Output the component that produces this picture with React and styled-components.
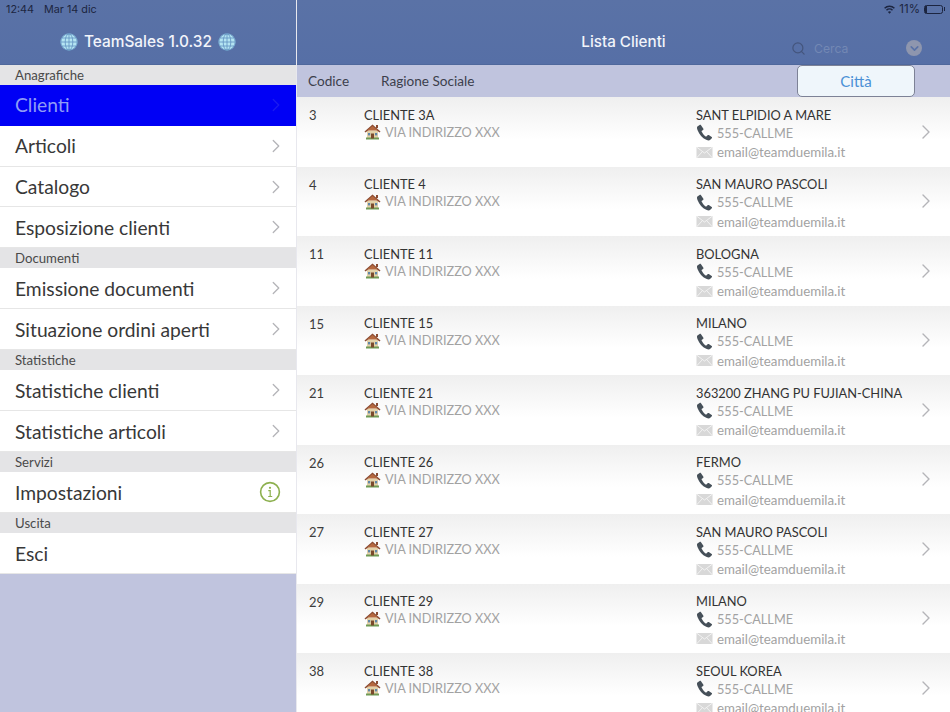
import React from "react";
import styled, { createGlobalStyle } from "styled-components";
import { ChevronRight, ChevronDown, Search } from "lucide-react";

const GlobalStyle = createGlobalStyle`
  html, body {
    margin: 0;
    height: 712px;
    overflow: hidden;
    background: #c0c4de;
  }
  * {
    box-sizing: border-box;
  }
`;

const Page = styled.div`
  display: grid;
  grid-template-columns: 297px 653px;
  width: 950px;
  height: 712px;
  overflow: hidden;
  font-family: Lato, "Open Sans", sans-serif;
`;

const Sidebar = styled.aside`
  background: #c0c4de;
  border-right: 1px solid #e8e8ee;
`;

const Header = styled.header`
  height: 65px;
  background: linear-gradient(#5a72a6, #566fa6);
  font-family: Inter, "Liberation Sans", sans-serif;
  color: #f2f4fa;
  border-bottom: 1px solid #4f689c;
`;

const StatusBar = styled.div`
  display: flex;
  align-items: center;
  justify-content: ${(p) => (p.$right ? "flex-end" : "flex-start")};
  height: 18px;
  padding: 0 ${(p) => (p.$right ? "6px" : "6px")};
  gap: ${(p) => (p.$right ? "4px" : "10px")};
  font-size: ${(p) => (p.$right ? "11.5px" : "10.8px")};
  color: #1c2540;
`;

const NavTitle = styled.div`
  display: flex;
  align-items: center;
  justify-content: center;
  gap: 6px;
  height: 47px;
  font-size: 15.4px;
  font-weight: 500;
`;

const Section = styled.div`
  height: 20px;
  padding-left: 15px;
  font-size: 13.2px;
  line-height: 20px;
  color: #4a4a4a;
  background: #e4e4e6;
`;

const MenuRow = styled.div`
  display: flex;
  align-items: center;
  justify-content: space-between;
  height: ${(p) => p.$h || 41}px;
  padding: 0 9px ${(p) => (p.$lift ? "1px" : "0")} 15px;
  font-size: 19.25px;
  color: ${(p) => (p.$active ? "#8f9cf5" : "#383838")};
  background: ${(p) => (p.$active ? "#0000f5" : "#fff")};
  border-bottom: 1px solid ${(p) => (p.$active ? "#0000f5" : "#e6e6e6")};
  svg {
    flex: none;
  }
`;

const InfoIcon = styled.svg`
  margin-right: 6px;
`;

const Main = styled.main`
  display: flex;
  flex-direction: column;
  overflow: hidden;
  background: #fff;
`;

const MainHeader = styled(Header)`
  position: relative;
`;

const MainTitle = styled(NavTitle)`
  font-size: 15.2px;
`;

const SearchBox = styled.div`
  position: absolute;
  left: 494px;
  top: 38px;
  display: flex;
  align-items: center;
  gap: 8px;
  width: 134px;
  height: 20px;
  font-size: 12.2px;
  color: #7388b4;
`;

const ClearDot = styled.span`
  display: flex;
  align-items: center;
  justify-content: center;
  width: 16px;
  height: 16px;
  margin-left: auto;
  margin-right: 3px;
  border-radius: 50%;
  background: #8e96ae;
  color: #5a72a6;
`;

const ColumnBar = styled.div`
  display: flex;
  align-items: center;
  flex: none;
  height: 32px;
  padding-left: 11px;
  font-size: 13.6px;
  color: #3c3f4c;
  background: #c0c4de;
`;

const ColumnCode = styled.span`
  width: 73px;
`;

const CityButton = styled.button`
  width: 118px;
  height: 32px;
  margin-left: auto;
  margin-right: 35px;
  border: 1px solid #7d8296;
  border-radius: 5px;
  background: #eff6fb;
  color: #4a90d6;
  font-family: Lato, sans-serif;
  font-size: 15px;
`;

const ClientRow = styled.div`
  display: grid;
  grid-template-columns: 55px 332px 218px 36px;
  flex: none;
  height: 69.5px;
  padding-left: 12px;
  background: linear-gradient(#efefef, #fff 62%);
  border-bottom: 1px solid #fff;
`;

const Code = styled.div`
  padding-top: 10px;
  font-size: 13px;
  line-height: 16px;
  color: #3c3c3c;
`;

const Column = styled.div`
  padding-top: 9.8px;
  min-width: 0;
`;

const Name = styled.div`
  font-size: 12.85px;
  line-height: 16.6px;
  color: #333;
  white-space: nowrap;
`;

const Detail = styled.div`
  display: flex;
  align-items: center;
  gap: 4px;
  height: ${(p) => p.$h || 17}px;
  margin-top: ${(p) => p.$mt || 0}px;
  font-size: ${(p) => p.$size || 12.7}px;
  color: #a2a2a2;
  white-space: nowrap;
  svg {
    flex: none;
  }
`;

const Chevron = styled.div`
  display: flex;
  align-items: center;
  padding-top: 1px;
  color: #b4b4b8;
`;

const Battery = styled.span`
  position: relative;
  display: inline-block;
  width: 19px;
  height: 9px;
  margin-right: 1px;
  border: 1px solid #1c2540;
  border-radius: 2.5px;
  &::before {
    content: "";
    display: block;
    width: 2px;
    height: 100%;
    background: #1c2540;
  }
  &::after {
    content: "";
    position: absolute;
    right: -3px;
    top: 1.5px;
    width: 1.5px;
    height: 4px;
    background: #1c2540;
  }
`;

function WifiMark() {
  return (
    <svg width="11" height="9" viewBox="0 0 11 9">
      <g fill="none" stroke="#1c2540" strokeWidth="1.5">
        <path d="M.6 3.200a7 7 0 0 1 9.800 0" />
        <path d="M2.500 5.200a4.300 4.300 0 0 1 6 0" />
      </g>
      <path d="M3.900 6.900a2.300 2.300 0 0 1 3.200 0L5.500 8.700z" fill="#1c2540" />
    </svg>
  );
}

function Globe() {
  return (
    <svg width="18" height="18" viewBox="0 0 18 18">
      <circle cx="9" cy="9" r="8.5" fill="#b4e4f2" />
      <g fill="none" stroke="#5f90c0" strokeWidth="0.8">
        <circle cx="9" cy="9" r="8.2" />
        <ellipse cx="9" cy="9" rx="3.8" ry="8.2" />
        <path d="M9 .8v16.400M.8 9h16.400M2 5h14M2 13h14" />
      </g>
    </svg>
  );
}

function House() {
  return (
    <svg width="17" height="17" viewBox="0 0 17 16">
      <rect x="3" y="7" width="11" height="8" fill="#e3d1a8" />
      <path d="M.5 8 8.500 1l8 7-1 1-7-5.600L1.500 9z" fill="#8a4b32" />
      <path d="M8.500 2.500 3 7h11z" fill="#b5683f" />
      <rect x="12" y="1.500" width="2" height="3" fill="#8a4b32" />
      <rect x="2" y="14" width="13" height="2" fill="#6f9a54" />
      <rect x="7" y="10" width="3" height="5" fill="#7a4a2c" />
      <rect x="4" y="9.500" width="2.200" height="2.400" fill="#5f86a8" />
      <rect x="11" y="9.500" width="2.200" height="2.400" fill="#5f86a8" />
    </svg>
  );
}

function Phone() {
  return (
    <svg width="17" height="17" viewBox="0 0 17 17">
      <path
        d="M3.600 1 1.400 2.400C.8 3 .9 4.500 1.600 6.200c1.700 4.200 4.700 7.800 8.600 9.600 1.600.7 3 .9 3.800.3l1.800-1.800c.4-.4.3-.9-.1-1.200l-2.900-2c-.4-.3-.9-.2-1.200.1l-1 1.100c-.3.3-.6.3-1 .1-1.600-1-3.200-3-4-4.800-.1-.4 0-.7.3-.9l1.200-.8c.4-.3.5-.8.3-1.200L5 1.300C4.700.8 4.100.7 3.600 1z"
        fill="#465059"
      />
    </svg>
  );
}

function Mail() {
  return (
    <svg width="17" height="11" viewBox="0 0 16 11">
      <rect width="16" height="11" fill="#d8d8d8" />
      <path d="M0 0l8 6 8-6M0 11l6-6.500M16 11l-6-6.500" fill="none" stroke="#f2f2f2" strokeWidth="1" />
    </svg>
  );
}

function SerifInfo() {
  return (
    <InfoIcon width="22" height="22" viewBox="0 0 22 22">
      <circle cx="11" cy="11" r="9.4" fill="none" stroke="#8db04f" strokeWidth="1.6" />
      <circle cx="11" cy="6.800" r="1.100" fill="#8db04f" />
      <path d="M9.300 9.700H11.200V15.300M9.200 15.500h4" fill="none" stroke="#8db04f" strokeWidth="1.200" />
    </InfoIcon>
  );
}

const menu = [
  { section: "Anagrafiche" },
  { label: "Clienti", active: true, lift: true },
  { label: "Articoli", lift: true },
  { label: "Catalogo", h: 40 },
  { label: "Esposizione clienti" },
  { section: "Documenti" },
  { label: "Emissione documenti" },
  { label: "Situazione ordini aperti" },
  { section: "Statistiche" },
  { label: "Statistiche clienti" },
  { label: "Statistiche articoli" },
  { section: "Servizi" },
  { label: "Impostazioni", info: true },
  { section: "Uscita" },
  { label: "Esci", plain: true },
];

const clients = [
  ["3", "CLIENTE 3A", "SANT ELPIDIO A MARE"],
  ["4", "CLIENTE 4", "SAN MAURO PASCOLI"],
  ["11", "CLIENTE 11", "BOLOGNA"],
  ["15", "CLIENTE 15", "MILANO"],
  ["21", "CLIENTE 21", "363200 ZHANG PU FUJIAN-CHINA"],
  ["26", "CLIENTE 26", "FERMO"],
  ["27", "CLIENTE 27", "SAN MAURO PASCOLI"],
  ["29", "CLIENTE 29", "MILANO"],
  ["38", "CLIENTE 38", "SEOUL KOREA"],
];

function App() {
  return (
    <Page>
      <GlobalStyle />
      <Sidebar>
        <Header>
          <StatusBar>
            <span>12:44</span>
            <span>Mar 14 dic</span>
          </StatusBar>
          <NavTitle>
            <Globe />
            TeamSales 1.0.32
            <Globe />
          </NavTitle>
        </Header>
        {menu.map((item) =>
          item.section ? (
            <Section key={item.section}>{item.section}</Section>
          ) : (
            <MenuRow
              key={item.label}
              $active={item.active}
              $h={item.h}
              $lift={item.lift}
            >
              {item.label}
              {item.info && <SerifInfo />}
              {!item.info && !item.plain && (
                <ChevronRight
                  size={22}
                  strokeWidth={1.4}
                  color={item.active ? "#1a1af0" : "#b4b4b8"}
                />
              )}
            </MenuRow>
          )
        )}
      </Sidebar>
      <Main>
        <MainHeader>
          <StatusBar $right>
            <WifiMark />
            <span>11%</span>
            <Battery />
          </StatusBar>
          <MainTitle>Lista Clienti</MainTitle>
          <SearchBox>
            <Search size={15} color="#44557d" strokeWidth={2} />
            Cerca
            <ClearDot>
              <ChevronDown size={13} strokeWidth={3} />
            </ClearDot>
          </SearchBox>
        </MainHeader>
        <ColumnBar>
          <ColumnCode>Codice</ColumnCode>
          <span>Ragione Sociale</span>
          <CityButton>Città</CityButton>
        </ColumnBar>
        {clients.map(([code, name, city]) => (
          <ClientRow key={code}>
            <Code>{code}</Code>
            <Column>
              <Name>{name}</Name>
              <Detail>
                <House />
                VIA INDIRIZZO XXX
              </Detail>
            </Column>
            <Column>
              <Name>{city}</Name>
              <Detail $h={19}>
                <Phone />
                555-CALLME
              </Detail>
              <Detail $size={13.3} $mt={1.5}>
                <Mail />
                email@teamduemila.it
              </Detail>
            </Column>
            <Chevron>
              <ChevronRight size={24} strokeWidth={1.4} />
            </Chevron>
          </ClientRow>
        ))}
      </Main>
    </Page>
  );
}

export default App;
